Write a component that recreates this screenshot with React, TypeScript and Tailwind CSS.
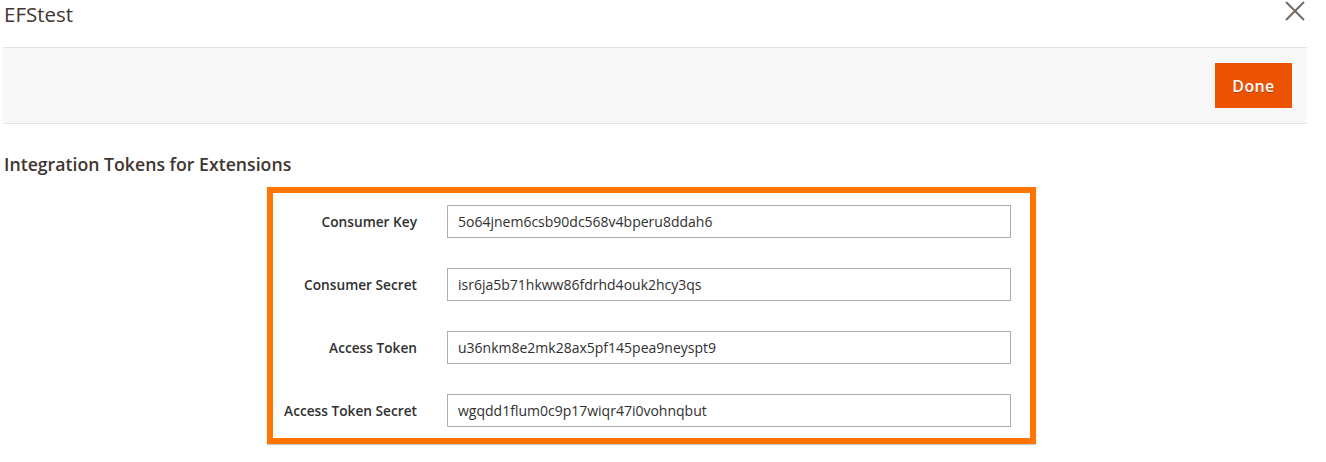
import React from 'react';

const tokens = [
  { label: 'Consumer Key', value: '5o64jnem6csb90dc568v4bperu8ddah6' },
  { label: 'Consumer Secret', value: 'isr6ja5b71hkww86fdrhd4ouk2hcy3qs' },
  { label: 'Access Token', value: 'u36nkm8e2mk28ax5pf145pea9neyspt9' },
  { label: 'Access Token Secret', value: 'wgqdd1flum0c9p17wiqr47i0vohnqbut' },
];

function TokenRow({ label, value }: { label: string; value: string }) {
  return (
    <div className="flex items-center">
      <label className="w-[144px] text-right text-[13.7px] font-semibold text-[#303030] leading-[20px]">{label}</label>
      <input
        readOnly
        value={value}
        className="ml-[30px] w-[564px] h-[33px] border border-[#adadad] bg-white px-[10px] text-[14px] text-[#303030] outline-none"
        style={{ fontFamily: 'inherit' }}
      />
    </div>
  );
}

export default function App() {
  return (
    <div
      className="w-[1326px] h-[462px] bg-white pl-[3px] pr-[19px]"
      style={{ fontFamily: '"Open Sans", "Liberation Sans", sans-serif' }}
    >
      {/* header */}
      <div className="h-[47px] flex justify-between items-start">
        <h1 className="ml-[1px] text-[20.5px] leading-[28px] text-[#41362f] font-normal">EFStest</h1>
        <button className="mt-[1px] mr-[2px] text-[#736963]" aria-label="Close">
          <svg width="20" height="20" viewBox="0 0 20 20" fill="none" stroke="currentColor" strokeWidth="2">
            <path d="M1 1L19 19M19 1L1 19" />
          </svg>
        </button>
      </div>

      {/* action bar */}
      <div className="h-[77px] border-y border-[#e3e3e3] bg-[#f8f8f8] flex items-center justify-end pr-[15px]">
        <button className="w-[77px] h-[45px] bg-[#eb5202] text-white text-[16px] font-semibold tracking-[0.4px] [text-shadow:0_1px_0_rgba(0,0,0,0.25)]">
          Done
        </button>
      </div>

      <h2 className="mt-[28px] ml-[1px] text-[17.7px] leading-[24px] font-semibold text-[#41362f]">
        Integration Tokens for Extensions
      </h2>

      <div className="mt-[11px] ml-[264px] w-[769px] border-[6px] border-[#ff7500] pt-[12px] pb-[11px] flex flex-col gap-[30px] shadow-[0_1px_1px_rgba(0,0,0,0.2)]">
        {tokens.map((t) => (
          <TokenRow key={t.label} label={t.label} value={t.value} />
        ))}
      </div>
    </div>
  );
}
